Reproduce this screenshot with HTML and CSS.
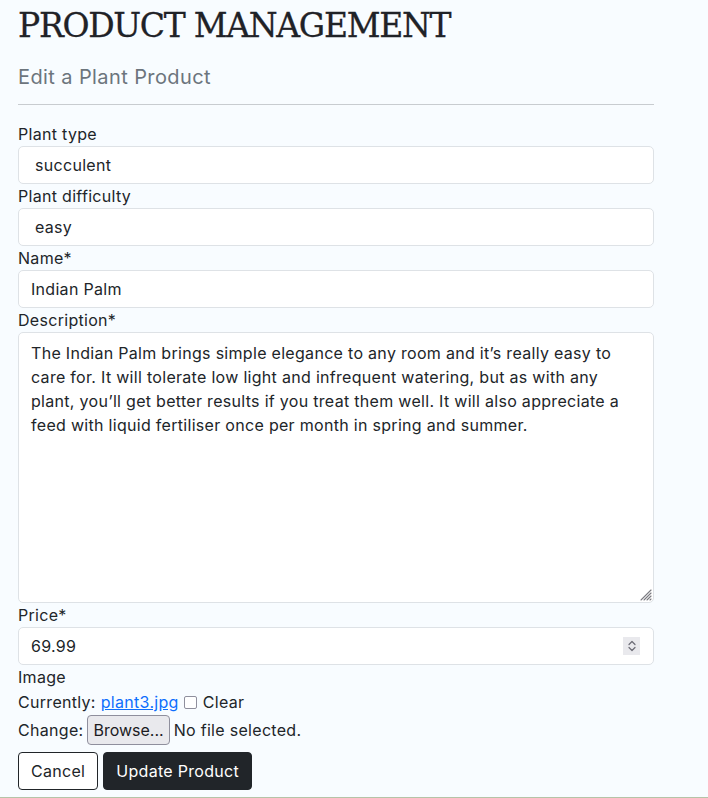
FILE: index.html
```html
<!DOCTYPE html>
<html lang="en">
<head>
<meta charset="utf-8">
<title>Product Management</title>
<link rel="stylesheet" href="styles.css">
</head>
<body>
<main class="page">
  <h1 class="title">PRODUCT MANAGEMENT</h1>
  <h5 class="subtitle">Edit a Plant Product</h5>
  <hr class="rule">
  <form class="form">
    <div class="group">
      <label class="label">Plant type</label>
      <div class="control control-select">succulent</div>
    </div>
    <div class="group">
      <label class="label">Plant difficulty</label>
      <div class="control control-select">easy</div>
    </div>
    <div class="group">
      <label class="label">Name*</label>
      <div class="control">Indian Palm</div>
    </div>
    <div class="group">
      <label class="label">Description*</label>
      <div class="textarea-wrap">
        <textarea class="textarea">The Indian Palm brings simple elegance to any room and it’s really easy to care for. It will tolerate low light and infrequent watering, but as with any plant, you’ll get better results if you treat them well. It will also appreciate a feed with liquid fertiliser once per month in spring and summer.</textarea>
        <svg class="grip" width="14" height="14" viewBox="0 0 14 14" stroke="#7a7a80" stroke-width="1.1" stroke-linecap="round"><path d="M13 3 L3 13"/><path d="M13 6 L6 13"/><path d="M13 9 L9 13"/><path d="M13 12 L12 13"/></svg>
      </div>
    </div>
    <div class="group">
      <label class="label">Price*</label>
      <div class="control control-number">69.99
        <span class="spinner">
          <svg width="10" height="14" viewBox="0 0 10 14" fill="none" stroke="#6b6b75" stroke-width="1.2" stroke-linecap="round" stroke-linejoin="round"><path d="M2 5.5 L5 2.5 L8 5.5"/><path d="M2 8.5 L5 11.5 L8 8.5"/></svg>
        </span>
      </div>
    </div>
    <div class="group">
      <label class="label">Image</label>
      <div class="line line-current">Currently: <a class="link" href="#">plant3.jpg</a><span class="check"></span>Clear</div>
      <div class="line line-file">Change: <span class="browse">Browse...</span> No file selected.</div>
    </div>
    <div class="actions">
      <a class="btn btn-outline" href="#">Cancel</a>
      <button class="btn btn-dark" type="button">Update Product</button>
    </div>
  </form>
</main>
</body>
</html>
```
FILE: styles.css
```css
html, body {
  margin: 0;
  padding: 0;
}
body {
  background: #f8fcff;
  font-family: "Inter", "Open Sans", sans-serif;
  color: #212529;
  font-size: 16px;
  letter-spacing: 0.3px;
  height: 798px;
  overflow: hidden;
  box-sizing: border-box;
  border-bottom: 1px solid #b5c4a8;
}
.page {
  width: 636px;
  padding: 0 18px;
}
.title {
  margin: 0;
  padding-top: 2px;
  height: 48px;
  font-family: "DejaVu Serif", serif;
  font-weight: normal;
  font-size: 33px;
  line-height: 48px;
  letter-spacing: -1.3px;
  color: #1f2227;
  -webkit-text-stroke: 0.3px #1f2227;
}
.subtitle {
  margin: 13px 0 0;
  font-size: 20px;
  line-height: 28px;
  font-weight: normal;
  letter-spacing: 0.4px;
  color: #6c757d;
}
.rule {
  margin: 13px 0 17px;
  border: 0;
  border-top: 1px solid #c8ccd0;
  height: 0;
}
.form {
  display: flex;
  flex-direction: column;
}
.group {
  display: flex;
  flex-direction: column;
}
.label {
  line-height: 24px;
  height: 24px;
}
.control {
  box-sizing: border-box;
  height: 38px;
  border: 1px solid #dee2e6;
  border-radius: 5px;
  background: #fff;
  padding: 0 12px;
  display: flex;
  align-items: center;
  line-height: 24px;
  position: relative;
}
.control-select {
  padding-left: 16px;
}
.textarea-wrap {
  position: relative;
  display: flex;
}
.textarea {
  box-sizing: border-box;
  width: 100%;
  height: 271px;
  border: 1px solid #dee2e6;
  border-radius: 5px;
  background: #fff;
  padding: 8px 12px;
  font-family: "Inter", sans-serif;
  font-size: 16px;
  line-height: 24px;
  letter-spacing: 0.3px;
  color: #212529;
  resize: none;
  margin: 0;
}
.grip {
  position: absolute;
  right: 2px;
  bottom: 2px;
  pointer-events: none;
}
.spinner {
  position: absolute;
  right: 13px;
  top: 9px;
  width: 17px;
  height: 18px;
  background: #e9e9ed;
  display: flex;
  align-items: center;
  justify-content: center;
}
.line {
  height: 26px;
  line-height: 26px;
  display: flex;
  align-items: center;
  gap: 4px;
}
.line-current {
  gap: 5px;
}
.link {
  color: #0d6efd;
  text-decoration: underline;
}
.check {
  box-sizing: border-box;
  width: 13px;
  height: 13px;
  border: 1px solid #8f8f9d;
  border-radius: 2px;
  background: #fff;
  margin-right: 1px;
}
.line-file {
  height: 30px;
}
.browse {
  box-sizing: border-box;
  height: 30px;
  line-height: 28px;
  padding: 0 5px;
  letter-spacing: 0;
  background: #e9e9ed;
  border: 1px solid #8f8f9d;
  border-radius: 4px;
  color: #1b1b1f;
}
.actions {
  display: flex;
  gap: 5px;
  margin-top: 7px;
}
.btn {
  box-sizing: border-box;
  height: 38px;
  padding: 0 12px;
  border-radius: 4px;
  font-family: "Inter", sans-serif;
  font-size: 16px;
  letter-spacing: 0.3px;
  display: inline-flex;
  align-items: center;
  text-decoration: none;
  cursor: pointer;
}
.btn-outline {
  background: #fff;
  color: #212529;
  border: 1px solid #212529;
}
.btn-dark {
  background: #212529;
  color: #fff;
  border: 1px solid #212529;
}
```
